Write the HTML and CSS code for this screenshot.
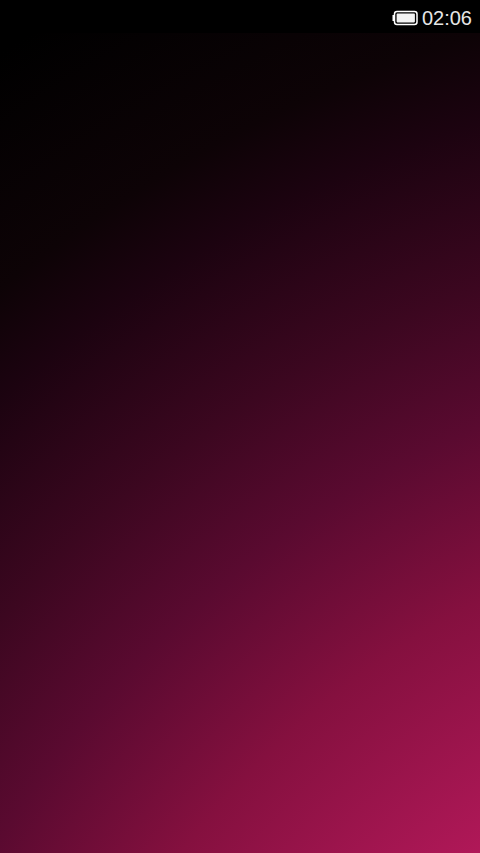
FILE: index.html
```html
<!DOCTYPE html>
<html lang="en">
<head>
    <meta charset="UTF-8">
    <meta name="viewport" content="width=device-width, initial-scale=1.0">
    <title>Lock screen</title>
    <link rel="stylesheet" href="styles.css">
</head>
<body>
    <div class="status-bar">
        <svg class="battery" width="26" height="16" viewBox="0 0 26 16" fill="none">
            <rect x="2.5" y="1.5" width="22.5" height="13" rx="2.5" stroke="#fff" stroke-width="1.5"/>
            <rect x="4.6" y="3.6" width="18.3" height="8.8" rx="0.8" fill="#f2f2f2"/>
            <rect x="0.5" y="5" width="2" height="6" fill="#fff"/>
        </svg>
        <span class="clock">02:06</span>
    </div>
    <div class="wallpaper"></div>
</body>
</html>
```

FILE: styles.css
```css
html, body {
    height: 100%;
}
body {
    margin: 0;
    background-color: #000;
    display: flex;
    flex-direction: column;
    font-family: "Liberation Sans", Arial, sans-serif;
    overflow: hidden;
}
.status-bar {
    height: 33px;
    flex: none;
    background-color: #000;
    color: #e6e6e6;
    display: flex;
    justify-content: flex-end;
    align-items: center;
    gap: 4px;
    padding: 3px 8px 0 0;
    box-sizing: border-box;
}
.battery {
    display: block;
}
.clock {
    font-size: 20px;
    line-height: 1;
}
.wallpaper {
    flex: 1;
    background: radial-gradient(circle at 900px 1367px, #b01858 690px, #85103f 903px, #5a0a30 1060px, #3c0720 1190px, #1c0310 1345px, #0d0306 1430px, #000 1620px);
}
```
